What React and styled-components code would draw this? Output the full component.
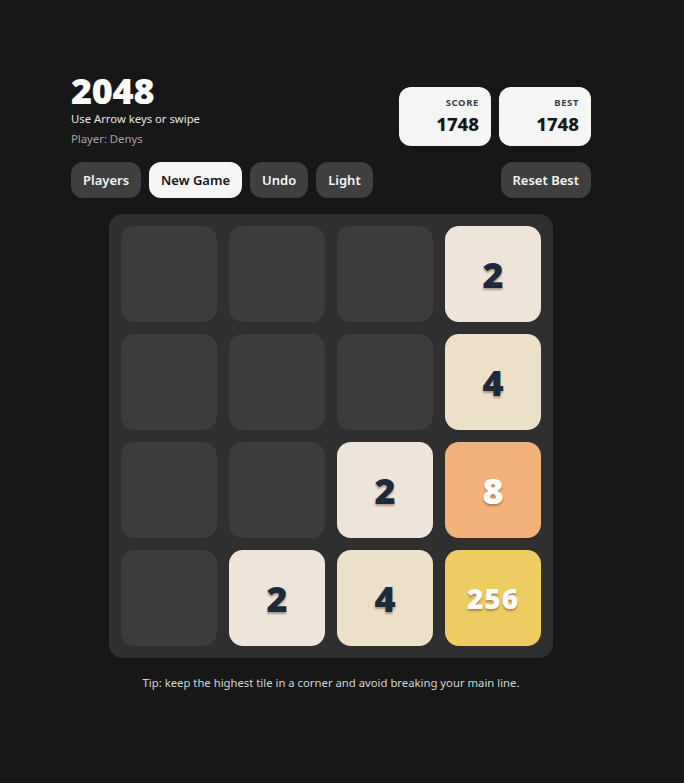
import React from "react";
import styled, { createGlobalStyle } from "styled-components";

const Global = createGlobalStyle`
  html, body { margin: 0; padding: 0; background: #171717; }
  body { font-family: "Noto Sans", "Open Sans", sans-serif; color: #f5f5f5; }
`;

const Page = styled.div`
  display: flex;
  justify-content: center;
  padding: 72px 22px 0 0;
  min-height: 783px;
  box-sizing: border-box;
`;

const Wrap = styled.div`
  width: 520px;
  display: flex;
  flex-direction: column;
  align-items: center;
`;

const Header = styled.div`
  width: 100%;
  display: flex;
  justify-content: space-between;
  align-items: flex-start;
`;

const TitleBlock = styled.div`
  display: flex;
  flex-direction: column;
`;

const Title = styled.h1`
  margin: 0;
  font-size: 36px;
  font-weight: 900;
  line-height: 38px;
  color: #ffffff;
  letter-spacing: -0.3px;
`;

const Sub = styled.div`
  font-size: 11.3px;
  line-height: 18px;
  color: ${(p) => (p.$muted ? "#a3a3a3" : "#e5e5e5")};
  margin-top: ${(p) => (p.$muted ? "2px" : "0")};
`;

const Scores = styled.div`
  display: flex;
  gap: 8px;
  margin-top: 15px;
`;

const ScoreBox = styled.div`
  width: 92px;
  height: 59px;
  box-sizing: border-box;
  background: #f5f5f5;
  border-radius: 12px;
  padding: 10px 12px 0 0;
  display: flex;
  flex-direction: column;
  align-items: flex-end;
`;

const ScoreLabel = styled.div`
  font-size: 9.5px;
  font-weight: 700;
  letter-spacing: 0.6px;
  color: #404040;
  line-height: 12px;
`;

const ScoreValue = styled.div`
  font-size: 18.5px;
  font-weight: 800;
  color: #171717;
  line-height: 26px;
  margin-top: 2px;
`;

const Toolbar = styled.div`
  width: 100%;
  display: flex;
  gap: 8px;
  margin-top: 14px;
`;

const Button = styled.button`
  height: 36px;
  padding: 0 12px;
  border: none;
  border-radius: 12px;
  font-family: inherit;
  font-size: 13px;
  font-weight: 600;
  cursor: pointer;
  background: ${(p) => (p.$primary ? "#f5f5f5" : "#3f3f3f")};
  color: ${(p) => (p.$primary ? "#171717" : "#f5f5f5")};
  margin-left: ${(p) => (p.$push ? "auto" : "0")};
`;

const Board = styled.div`
  margin-top: 16px;
  width: 444px;
  height: 444px;
  box-sizing: border-box;
  padding: 12px;
  background: #2f2f2f;
  border-radius: 14px;
  display: grid;
  grid-template-columns: repeat(4, 96px);
  grid-template-rows: repeat(4, 96px);
  gap: 12px;
`;

const tileColors = {
  0: ["#3c3c3c", "transparent"],
  2: ["#eee4da", "#1e293b"],
  4: ["#ede0c8", "#1e293b"],
  8: ["#f2b179", "#ffffff"],
  256: ["#edcc61", "#ffffff"],
};

const Tile = styled.div`
  border-radius: 14px;
  background: ${(p) => tileColors[p.$v][0]};
  color: ${(p) => tileColors[p.$v][1]};
  display: flex;
  align-items: center;
  justify-content: center;
  font-size: ${(p) => (p.$v >= 100 ? "28px" : "36px")};
  font-weight: 900;
  text-shadow: ${(p) => (p.$v ? "0 2px 2px rgba(90, 60, 30, 0.45)" : "none")};
  letter-spacing: ${(p) => (p.$v >= 100 ? "1px" : "0")};
`;

const Tip = styled.p`
  margin: 17px 0 0;
  font-size: 11.3px;
  color: #d4d4d4;
  text-align: center;
`;

const grid = [
  [0, 0, 0, 2],
  [0, 0, 0, 4],
  [0, 0, 2, 8],
  [0, 2, 4, 256],
];

export default function App() {
  return (
    <>
      <Global />
      <Page>
        <Wrap>
          <Header>
            <TitleBlock>
              <Title>2048</Title>
              <Sub>Use Arrow keys or swipe</Sub>
              <Sub $muted>Player: Denys</Sub>
            </TitleBlock>
            <Scores>
              <ScoreBox>
                <ScoreLabel>SCORE</ScoreLabel>
                <ScoreValue>1748</ScoreValue>
              </ScoreBox>
              <ScoreBox>
                <ScoreLabel>BEST</ScoreLabel>
                <ScoreValue>1748</ScoreValue>
              </ScoreBox>
            </Scores>
          </Header>
          <Toolbar>
            <Button>Players</Button>
            <Button $primary>New Game</Button>
            <Button>Undo</Button>
            <Button>Light</Button>
            <Button $push>Reset Best</Button>
          </Toolbar>
          <Board>
            {grid.flat().map((v, i) => (
              <Tile key={i} $v={v}>
                {v || ""}
              </Tile>
            ))}
          </Board>
          <Tip>Tip: keep the highest tile in a corner and avoid breaking your main line.</Tip>
        </Wrap>
      </Page>
    </>
  );
}
